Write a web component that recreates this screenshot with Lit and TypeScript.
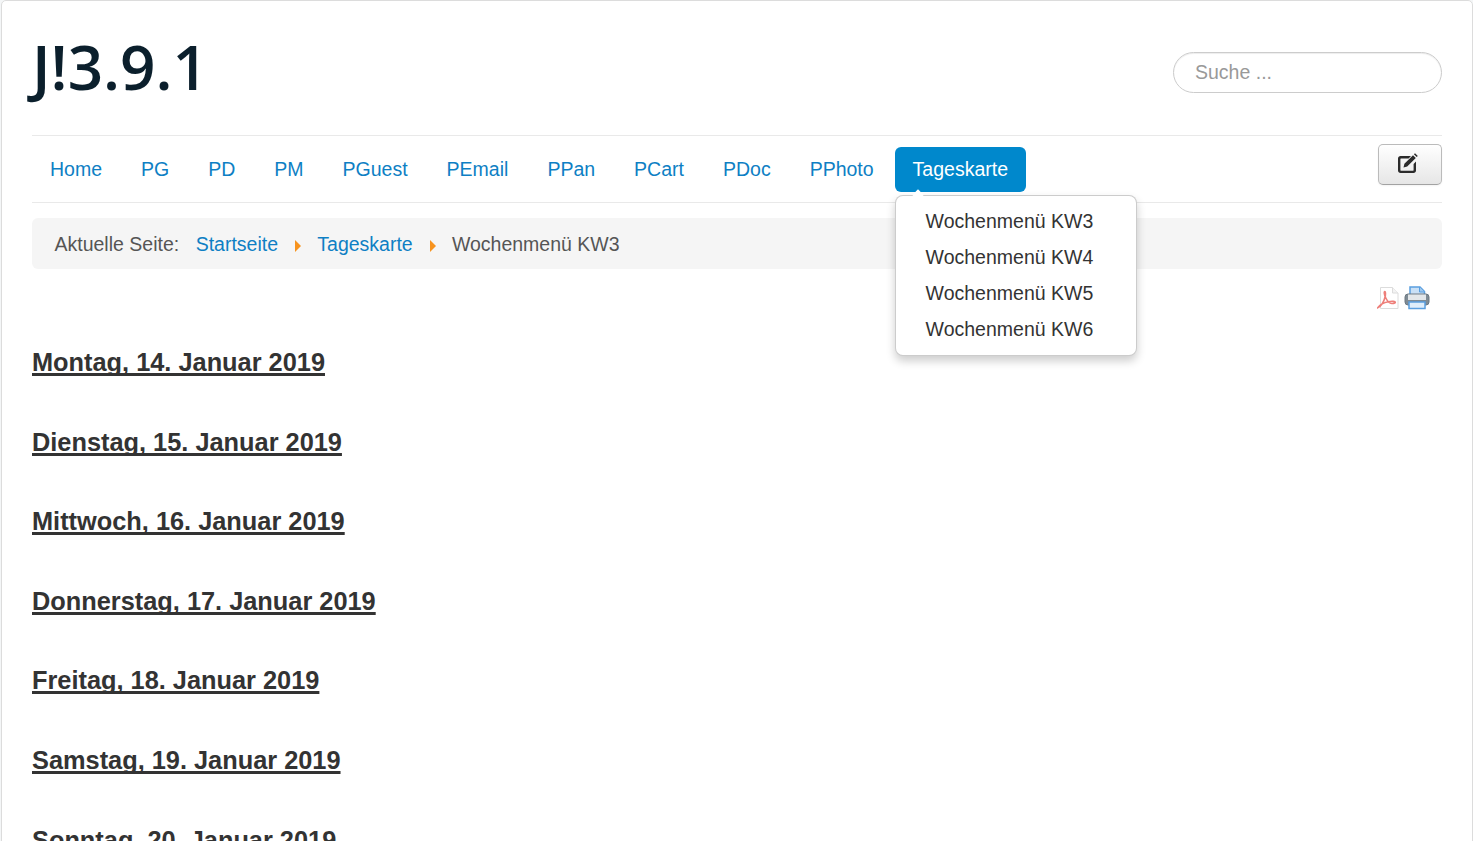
import { LitElement, html, css, svg } from "lit";
import { customElement } from "lit/decorators.js";

const NAV = ["Home", "PG", "PD", "PM", "PGuest", "PEmail", "PPan", "PCart", "PDoc", "PPhoto"];
const MENU = ["Wochenmenü KW3", "Wochenmenü KW4", "Wochenmenü KW5", "Wochenmenü KW6"];
const DAYS = [
  "Montag, 14. Januar 2019",
  "Dienstag, 15. Januar 2019",
  "Mittwoch, 16. Januar 2019",
  "Donnerstag, 17. Januar 2019",
  "Freitag, 18. Januar 2019",
  "Samstag, 19. Januar 2019",
  "Sonntag, 20. Januar 2019",
];

const editIcon = svg`<svg width="20" height="20" viewBox="0 0 20 20"><path d="M2.500 3h10.500l-2.400 2.400H2.900a.5.500 0 0 0-.5.500v11.300c0 .3.200.5.500.5h12.200c.3 0 .5-.2.500-.5v-6.300l2.400-2.400v9.100c0 1.300-1.100 2.400-2.400 2.400H2.500C1.100 20 0 18.900 0 17.600V5.400C0 4.100 1.100 3 2.500 3z" fill="#2b2b2b"/><path d="M17 .2l2.800 2.800-1.100 1.100-2.800-2.800zM15 2.200l2.800 2.800-8.600 8.600-3.700.9.900-3.700z" fill="#2b2b2b"/></svg>`;

const pdfIcon = svg`<svg width="24" height="24" viewBox="0 0 24 24"><path d="M3.500 1.500h12l5.500 5.500v15.500h-17.500z" fill="#fff" stroke="#dcdcdc"/><path d="M15.500 1.500v5.500h5.500" fill="#f3f3f3" stroke="#dcdcdc"/><path d="M1 21.500c3-1.500 6-6 7.200-11 .5-3 .3-5-.4-5-.8 0-.8 3 1 6.500 1.500 3 4 5.500 6 5.500 2 0 3.500-.5 3.500-1.200 0-1-3-1.300-7-.6-3.500.6-8 2.300-10.300 5.800z" fill="none" stroke="#ee7f7a" stroke-width="1.600"/></svg>`;

const printIcon = svg`<svg width="26" height="24" viewBox="0 0 26 24"><path d="M6 1h10l4.500 4.500v7.500H6z" fill="#c9e0f6" stroke="#5a9fe0" stroke-width="1.500"/><path d="M15.500 1v5h5" fill="#9fc8ee" stroke="#5a9fe0"/><rect x="1" y="8" width="24" height="11" rx="3" fill="#7f8b94" stroke="#6c7882"/><rect x="4" y="8.500" width="18" height="5.500" fill="#e3e7ea"/><rect x="5" y="16" width="16" height="6.500" fill="#dfeefb" stroke="#5a9fe0" stroke-width="1.500"/></svg>`;

@customElement("app-root")
export class AppRoot extends LitElement {
  static styles = css`
    :host {
      display: block;
      height: 100vh;
      overflow: hidden;
      background: #f4f6f7;
      font-family: "Liberation Sans", Arial, sans-serif;
      color: #333;
      font-size: 19.500px;
      line-height: 24px;
    }
    a { text-decoration: none; color: #0e7fc4; }
    .card {
      box-sizing: border-box;
      margin: 0 0 0 1px;
      width: 1472px;
      min-height: 1000px;
      background: #fff;
      border: 1px solid #dcdcdc;
      border-radius: 5px;
      padding: 0 30px;
    }
    .header {
      display: flex;
      justify-content: space-between;
      align-items: flex-start;
      height: 134px;
      border-bottom: 1px solid #e9e9e9;
    }
    .brand {
      font-family: "Open Sans", sans-serif;
      font-size: 62px;
      font-weight: 600;
      line-height: 82px;
      color: #0b1f2c;
      margin: 24px 0 0 0;
    }
    .search {
      box-sizing: border-box;
      width: 269px;
      height: 41px;
      margin-top: 51px;
      padding-left: 21px;
      border: 1px solid #ccc;
      border-radius: 21px;
      box-shadow: inset 0 1px 1px rgba(0, 0, 0, 0.075);
      color: #999;
      line-height: 39px;
    }
    .navbar {
      position: relative;
      display: flex;
      justify-content: space-between;
      height: 66px;
      border-bottom: 1px solid #e9e9e9;
    }
    .nav { display: flex; gap: 3px; padding-top: 11px; }
    .item { position: relative; }
    .item > a {
      display: block;
      height: 45px;
      padding: 0 18px;
      line-height: 45px;
      border-radius: 6px;
    }
    .item.active > a { background: #0088cc; color: #fff; }
    .menu {
      position: absolute;
      z-index: 2;
      top: 48px;
      left: 0;
      box-sizing: border-box;
      width: 242px;
      padding: 7px 0 8px;
      background: #fff;
      border: 1px solid rgba(0, 0, 0, 0.2);
      border-radius: 8px;
      box-shadow: 0 5px 10px rgba(0, 0, 0, 0.2);
    }
    .menu::before {
      content: "";
      position: absolute;
      top: -5px;
      left: 18px;
      width: 8px;
      height: 8px;
      background: #fff;
      transform: rotate(45deg);
    }
    .menu a { display: block; height: 36px; line-height: 36px; padding-left: 30px; color: #333; position: relative; }
    .edit {
      box-sizing: border-box;
      width: 64px;
      height: 41px;
      margin-top: 8px;
      padding: 0 5px 3px 0;
      display: flex;
      align-items: center;
      justify-content: center;
      border: 1px solid #bbb;
      border-bottom-color: #a2a2a2;
      border-radius: 5px;
      background: linear-gradient(#fff, #e6e6e6);
      box-shadow: 0 1px 2px rgba(0, 0, 0, 0.05);
    }
    .crumbs {
      display: flex;
      align-items: center;
      height: 51px;
      margin-top: 15px;
      padding-left: 22.500px;
      background: #f5f5f5;
      border-radius: 6px;
      color: #555;
    }
    .label { margin-right: 16.500px; }
    .sep {
      width: 0;
      height: 0;
      margin: 4px 16.250px 0 17px;
      border-left: 6.500px solid #f7931e;
      border-top: 6px solid transparent;
      border-bottom: 6px solid transparent;
    }
    .tools {
      display: flex;
      justify-content: flex-end;
      gap: 3px;
      padding: 17px 12px 0 0;
      height: 24px;
    }
    .tools svg { display: block; }
    h2 {
      margin: 0 0 50px;
      font-size: 25.350px;
      line-height: 29.600px;
      font-weight: bold;
      color: #333;
      text-decoration: underline;
      text-decoration-thickness: 3px;
      text-decoration-skip-ink: none;
    }
    .days { padding-top: 38px; }
  `;

  render() {
    return html`
      <div class="card">
        <div class="header">
          <div class="brand">J!3.9.1</div>
          <div class="search">Suche ...</div>
        </div>
        <div class="navbar">
          <div class="nav">
            ${NAV.map((n) => html`<div class="item"><a href="#">${n}</a></div>`)}
            <div class="item active">
              <a href="#">Tageskarte</a>
              <div class="menu">${MENU.map((m) => html`<a href="#">${m}</a>`)}</div>
            </div>
          </div>
          <div class="edit">${editIcon}</div>
        </div>
        <div class="crumbs">
          <span class="label">Aktuelle Seite:</span>
          <a href="#">Startseite</a><span class="sep"></span>
          <a href="#">Tageskarte</a><span class="sep"></span>
          <span>Wochenmenü KW3</span>
        </div>
        <div class="tools">${pdfIcon}${printIcon}</div>
        <div class="days">${DAYS.map((d) => html`<h2>${d}</h2>`)}</div>
      </div>
    `;
  }
}
